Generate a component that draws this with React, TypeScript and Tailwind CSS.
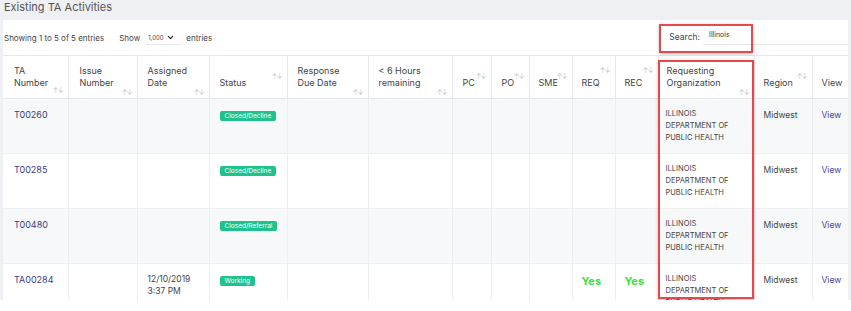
import { ChevronDown } from "lucide-react";

// header columns: label lines, width, sort icon offset from top of header //
const columns = [
  { label: ["TA", "Number"], width: 65, icon: 28, pad: 11 },
  { label: ["Issue", "Number"], width: 69, icon: 30, pad: 11 },
  { label: ["Assigned", "Date"], width: 72, icon: 30, pad: 10 },
  { label: ["Status"], width: 78, icon: 14, pad: 10 },
  { label: ["Response", "Due Date"], width: 81, icon: 30, pad: 10 },
  { label: ["< 6 Hours", "remaining"], width: 84, icon: 30, pad: 10 },
  { label: ["PC"], width: 39, icon: 14, pad: 10 },
  { label: ["PO"], width: 38, icon: 14, pad: 10 },
  { label: ["SME"], width: 43, icon: 14, pad: 9 },
  { label: ["REQ"], width: 43, icon: 8, pad: 9 },
  { label: ["REC"], width: 43, icon: 8, pad: 9 },
  { label: ["Requesting", "Organization"], width: 96, icon: 30, pad: 8 },
  { label: ["Region"], width: 58, icon: 14, pad: 9 },
  { label: ["View"], width: 36, icon: null, pad: 9 },
];

const rows = [
  { id: "T00260", date: [], status: "Closed/Decline", req: "", rec: "" },
  { id: "T00285", date: [], status: "Closed/Decline", req: "", rec: "" },
  { id: "T00480", date: [], status: "Closed/Referral", req: "", rec: "" },
  { id: "TA00284", date: ["12/10/2019", "3:37 PM"], status: "Working", req: "Yes", rec: "Yes" },
];

const SortIcon = () => (
  <span className="text-[7px] leading-none text-[#c3c7cf] tracking-[-1px]">↑↓</span>
);

const App = () => {
  return (
    <div className="w-[851px] h-[311px] overflow-hidden bg-[#eef0f4] font-['Inter',sans-serif] text-[#444]">
      <div className="h-[20px] pl-[4px] text-[11px] leading-[14px] text-[#555]">Existing TA Activities</div>

      <div className="relative mx-[3px] h-[280px] overflow-hidden bg-white">
        {/* controls */}
        <div className="flex h-[35px] items-center justify-between text-[8px]">
          <div className="flex items-center pl-[1px]">
            <span>Showing 1 to 5 of 5 entries</span>
            <span className="ml-[15px]">Show</span>
            <span className="ml-[6px] flex w-[36px] items-center gap-[2px] border-b border-[#e5e7eb] pb-[2px] pt-[3px] pl-[2px] text-[6px]">
              1,000 <ChevronDown size={9} strokeWidth={3} className="text-[#222]" />
            </span>
            <span className="ml-[4px]">entries</span>
          </div>
          <div className="flex items-center">
            <span className="mr-[3px] text-[8.5px]">Search:</span>
            <div className="w-[145px] border-b border-[#e5e7eb] pb-[3px] pl-[6px] text-[7px] text-[#333]">Illinois</div>
          </div>
        </div>

        {/* annotation over search */}
        <div className="absolute left-[656px] top-[4px] h-[29px] w-[94px] border-2 border-[#e5484d] shadow-[0_1px_3px_rgba(0,0,0,0.25)]" />

        <table className="w-[845px] table-fixed border-collapse">
          <colgroup>
            {columns.map((c, i) => (
              <col key={i} style={{ width: c.width }} />
            ))}
          </colgroup>
          <thead>
            <tr className="h-[43px] border-y border-[#e6e8ec]">
              {columns.map((c, i) => (
                <th
                  key={i}
                  className="relative border-r border-[#e6e8ec] pb-[9px] text-left align-bottom text-[9px] font-normal leading-[12px] text-[#444] last:border-r-0"
                  style={{ paddingLeft: c.pad }}
                >
                  {c.label.map((l, j) => (
                    <div key={j}>{l}</div>
                  ))}
                  {c.icon !== null && (
                    <span className="absolute right-[5px]" style={{ top: c.icon }}>
                      <SortIcon />
                    </span>
                  )}
                </th>
              ))}
            </tr>
          </thead>
          <tbody>
            {rows.map((r, i) => (
              <tr key={r.id} className={`h-[55px] border-b border-[#eef0f3] ${i % 2 === 0 ? "bg-[#f7f8fa]" : "bg-white"}`}>
                <td className="border-r border-[#eceef1] pl-[11px] pt-[10px] align-top text-[9px] leading-[12px] text-[#3d3a7e]">{r.id}</td>
                <td className="border-r border-[#eceef1]" />
                <td className="border-r border-[#eceef1] pl-[10px] pt-[9px] align-top text-[8.5px] leading-[12px] text-[#444]">
                  {r.date.map((d) => (
                    <div key={d}>{d}</div>
                  ))}
                </td>
                <td className="border-r border-[#eceef1] pl-[10px] pt-[12px] align-top">
                  <div className="w-fit rounded-[2px] bg-[#1dc38b] px-[5px] py-[1px] text-[6.5px] leading-[8px] text-white">{r.status}</div>
                </td>
                <td className="border-r border-[#eceef1]" />
                <td className="border-r border-[#eceef1]" />
                <td className="border-r border-[#eceef1]" />
                <td className="border-r border-[#eceef1]" />
                <td className="border-r border-[#eceef1]" />
                <td className="border-r border-[#eceef1] pl-[9px] pt-[10px] align-top text-[11px] font-bold leading-[14px] text-[#3be23b]">{r.req}</td>
                <td className="border-r border-[#eceef1] pl-[9px] pt-[10px] align-top text-[11px] font-bold leading-[14px] text-[#3be23b]">{r.rec}</td>
                <td className="border-r border-[#eceef1] pl-[7px] pt-[9px] align-top text-[7.5px] leading-[12px] text-[#444]">
                  <div>ILLINOIS</div>
                  <div>DEPARTMENT OF</div>
                  <div>PUBLIC HEALTH</div>
                </td>
                <td className="border-r border-[#eceef1] pl-[9px] pt-[10px] align-top text-[8.5px] leading-[12px] text-[#444]">Midwest</td>
                <td className="pl-[9px] pt-[10px] align-top text-[8.5px] leading-[12px] text-[#4a3f9a]">View</td>
              </tr>
            ))}
          </tbody>
        </table>

        {/* annotation over Requesting Organization column */}
        <div className="absolute left-[655px] top-[40px] h-[239px] w-[96px] border-2 border-[#e5484d] shadow-[0_1px_3px_rgba(0,0,0,0.25)]" />
      </div>
      <div className="h-[11px] bg-white" />
    </div>
  );
};

export default App;
